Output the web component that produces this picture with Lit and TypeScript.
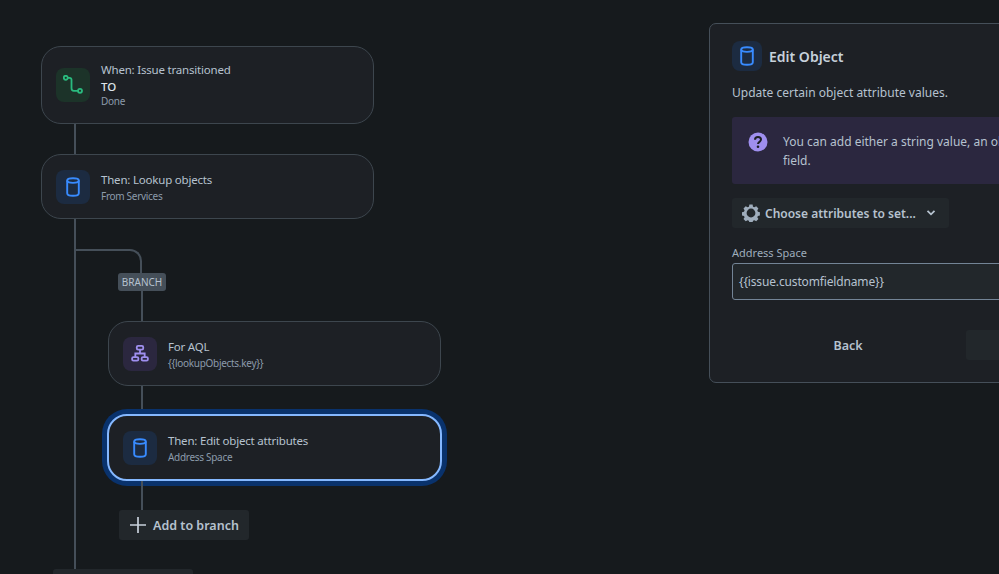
import { LitElement, html, css, svg } from "lit";
import { customElement } from "lit/decorators.js";

const cyl = svg`<svg width="20" height="20" viewBox="0 0 20 20" fill="none" stroke="#388bff" stroke-width="1.900"><ellipse cx="10" cy="3.600" rx="5.800" ry="2.300"/><path d="M4.200 3.600V16.200C4.200 17.800 6.800 18.800 10 18.800s5.800-1 5.800-2.600V3.600"/></svg>`;
const route = svg`<svg width="20" height="20" viewBox="0 0 20 20" fill="none" stroke="#2abb7f" stroke-width="1.800"><circle cx="2.800" cy="2.800" r="2"/><circle cx="17" cy="15.800" r="2"/><path d="M4.800 2.800H6.500c1.300 0 2 .8 2 2v8.500c0 1.600.9 2.500 2.300 2.500H15"/></svg>`;
const tree = svg`<svg width="18" height="19" viewBox="0 0 20 20" fill="none" stroke="#9f8fef" stroke-width="2"><rect x="6.400" y="1.500" width="7.200" height="4.200" rx="1.500"/><rect x="1.200" y="14" width="7" height="4" rx="1.500"/><rect x="11.800" y="14" width="7" height="4" rx="1.500"/><path d="M10 5.800V10M4.800 14V10H15.200V14"/></svg>`;
const gear = svg`<svg width="18" height="18" viewBox="0 0 18 18"><path fill="#9fadbc" fill-rule="evenodd" d="M7.400.6h3.200l.4 2.100 1.300.6 1.900-1.100 2.200 2.300-1.100 1.800.6 1.400 2 .5v3.200l-2 .5-.6 1.300 1.100 1.900-2.200 2.200-1.900-1.100-1.300.6-.5 2h-3.100l-.5-2-1.300-.6-1.900 1.100-2.200-2.200 1.100-1.900-.6-1.300-2-.5V8.200l2-.5.6-1.400-1.100-1.800 2.200-2.300 1.900 1.100 1.300-.6zM9 4.600a4.400 4.400 0 1 0 0 8.800 4.400 4.400 0 0 0 0-8.800z"/></svg>`;
const chev = svg`<svg width="10" height="8" viewBox="0 0 10 8" fill="none" stroke="#b6c2cf" stroke-width="1.800"><path d="M1.500 1.800 5 5.300l3.500-3.500"/></svg>`;
const plus = svg`<svg width="18" height="18" viewBox="0 0 18 18" stroke="#c7d1db" stroke-width="1.700"><path d="M1 9H17M9 1V17"/></svg>`;
const help = svg`<svg width="20" height="20" viewBox="0 0 20 20"><circle cx="10" cy="10" r="9.500" fill="#9f8fef"/><path d="M7 7.800C7 6 8.300 5.100 10 5.100s3 1 3 2.500c0 2.300-3 2.200-3 4.400" fill="none" stroke="#1d2025" stroke-width="2"/><circle cx="10" cy="14.700" r="1.300" fill="#1d2025"/></svg>`;

@customElement("app-root")
export class AppRoot extends LitElement {
  static styles = css`
    :host { display: flex; width: 999px; height: 574px; overflow: hidden; background: #161a1d;
      font-family: "Noto Sans", "Open Sans", sans-serif; color: #b6c2cf; }
    .canvas { width: 709px; flex: none; padding: 46px 0 0 41px; box-sizing: border-box; }
    .node { width: 333px; box-sizing: border-box; background: #1d2025; border: 1.5px solid #3d464e; border-radius: 20px;
      display: flex; align-items: center; gap: 11px; padding: 0 14px; height: 65px; }
    .node.tall { height: 78px; }
    .node.sel { width: 335px; height: 67px; margin-left: -1px; border: 2px solid #85b8ff; box-shadow: 0 0 0 5px #09326c; }
    .ico { width: 34px; height: 34px; border-radius: 8px; flex: none; display: flex; align-items: center; justify-content: center; }
    .green { background: #1c3329; }
    .blue { background: #1c2b41; }
    .purple { background: #2b273f; }
    .txt { display: flex; flex-direction: column; }
    .node:not(.tall) .txt { padding-top: 2px; }
    .t { font-size: 11.500px; line-height: 16px; letter-spacing: -0.2px; color: #b6c2cf; white-space: nowrap; }
    .to { font-size: 11.500px; line-height: 17px; margin-bottom: -2px; font-weight: 500; color: #dee4ea; }
    .s { font-size: 10px; line-height: 14px; margin-top: 1px; letter-spacing: -0.3px; color: #8c9bab; white-space: nowrap; }
    .conn { width: 2px; height: 30px; background: #454f59; margin-left: 33px; }
    .conn2 { width: 2px; background: #454f59; margin-left: 33px; }
    .trunk { margin-left: 33px; border-left: 2px solid #454f59; padding-top: 30px; height: 400px; box-sizing: border-box; }
    .elbow { width: 66px; height: 24px; box-sizing: border-box; border-top: 2px solid #454f59; border-right: 2px solid #454f59; border-top-right-radius: 12px; }
    .branch { margin-left: 32px; display: flex; flex-direction: column; }
    .badge { align-self: flex-start; margin-left: 10px; width: 48px; height: 18px; box-sizing: border-box; background: #454f59; border-radius: 3px;
      font-size: 10px; line-height: 18px; text-align: center; color: #b6c2cf; }
    .add { align-self: flex-start; margin-left: 11px; width: 130px; height: 30px; border-radius: 3px; background: #22272b; display: flex; align-items: center; gap: 6px; padding-left: 10px; box-sizing: border-box;
      font-size: 12.500px; font-weight: 600; color: #b6c2cf; }
    .stub { width: 140px; height: 30px; margin: 29px 0 0 -23px; position: relative; background: #22272b; border-radius: 3px; }
    .panel { width: 510px; flex: none; height: 360px; margin-top: 23px; box-sizing: border-box; background: #1d2025; border: 1px solid #454f59; border-radius: 7px;
      padding: 17px 22px; display: flex; flex-direction: column; align-items: flex-start; }
    .head { display: flex; align-items: center; gap: 7px; }
    .head .ico { width: 30px; height: 30px; }
    .title { font-size: 14px; font-weight: 600; color: #c7d1db; }
    .desc { font-size: 12px; line-height: 16px; margin-top: 14px; color: #b6c2cf; }
    .info { width: 100%; height: 67px; margin-top: 16px; box-sizing: border-box; border-radius: 3px; background: #2b273f; display: flex; gap: 15px; padding: 15px 16px; font-size: 12px; line-height: 19px; color: #b6c2cf; white-space: nowrap; }
    .info svg { flex: none; }
    .choose { margin-top: 14px; width: 217px; height: 30px; border-radius: 3px; background: #22272b; display: flex; align-items: center; padding-left: 10px; box-sizing: border-box; font-size: 12px; font-weight: 600; gap: 5px; white-space: nowrap; }
    .choose .c { margin-left: 5px; display: flex; }
    .label { font-size: 11px; line-height: 14px; margin-top: 18px; color: #9fadbc; }
    .input { width: 100%; height: 37px; margin-top: 3px; box-sizing: border-box; background: #22272b; border: 1px solid #738496; border-radius: 3px; display: flex; align-items: center; padding-left: 6px; font-size: 12px; letter-spacing: -0.15px; color: #b6c2cf; }
    .foot { display: flex; gap: 3px; margin-top: 30px; width: 100%; padding-left: 1px; box-sizing: border-box; }
    .foot div { flex: 1; height: 30px; display: flex; align-items: center; justify-content: center; font-size: 12.500px; font-weight: 600; border-radius: 3px; }
    .foot .next { background: #22272b; }
  `;

  private node(icon: unknown, cls: string, title: string, sub: string, extra = "", to = false) {
    return html`<div class="node ${extra}">
      <div class="ico ${cls}">${icon}</div>
      <div class="txt">
        <span class="t">${title}</span>
        ${to ? html`<span class="to">TO</span>` : ""}
        <span class="s">${sub}</span>
      </div>
    </div>`;
  }

  render() {
    return html`
      <div class="canvas">
        ${this.node(route, "green", "When: Issue transitioned", "Done", "tall", true)}
        <div class="conn"></div>
        ${this.node(cyl, "blue", "Then: Lookup objects", "From Services")}
        <div class="trunk">
          <div class="elbow"></div>
          <div class="branch">
            <div class="badge">BRANCH</div>
            <div class="conn2" style="height:30px"></div>
            ${this.node(tree, "purple", "For AQL", "{{lookupObjects.key}}")}
            <div class="conn2" style="height:28px"></div>
            ${this.node(cyl, "blue", "Then: Edit object attributes", "Address Space", "sel")}
            <div class="conn2" style="height:29px"></div>
            <div class="add">${plus}<span>Add to branch</span></div>
          </div>
          <div class="stub"></div>
        </div>
      </div>
      <div class="panel">
        <div class="head"><div class="ico blue">${cyl}</div><span class="title">Edit Object</span></div>
        <div class="desc">Update certain object attribute values.</div>
        <div class="info">${help}<div>You can add either a string value, an object key or a<br />field.</div></div>
        <div class="choose">${gear}<span>Choose attributes to set...</span><span class="c">${chev}</span></div>
        <div class="label">Address Space</div>
        <div class="input">{{issue.customfieldname}}</div>
        <div class="foot"><div>Back</div><div class="next"></div></div>
      </div>
    `;
  }
}
